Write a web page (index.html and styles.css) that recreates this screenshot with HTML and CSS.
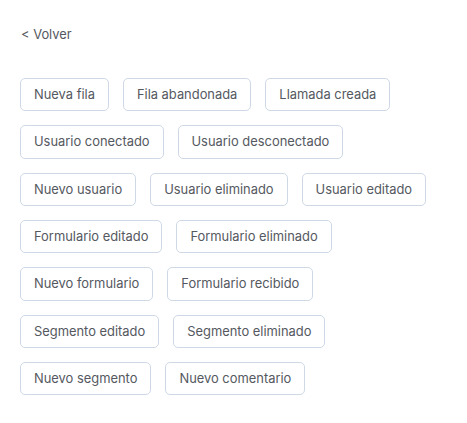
FILE: index.html
```html
<!DOCTYPE html>
<html lang="es">
<head>
<meta charset="utf-8">
<link rel="stylesheet" href="styles.css">
</head>
<body>
<div class="page">
  <a class="back" href="#">&lt; Volver</a>
  <div class="tags">
    <button class="tag">Nueva fila</button>
    <button class="tag">Fila abandonada</button>
    <button class="tag">Llamada creada</button>
    <button class="tag">Usuario conectado</button>
    <button class="tag">Usuario desconectado</button>
    <button class="tag">Nuevo usuario</button>
    <button class="tag">Usuario eliminado</button>
    <button class="tag">Usuario editado</button>
    <button class="tag">Formulario editado</button>
    <button class="tag">Formulario eliminado</button>
    <button class="tag">Nuevo formulario</button>
    <button class="tag">Formulario recibido</button>
    <button class="tag">Segmento editado</button>
    <button class="tag">Segmento eliminado</button>
    <button class="tag">Nuevo segmento</button>
    <button class="tag">Nuevo comentario</button>
  </div>
</div>
</body>
</html>
```
FILE: styles.css
```css
html, body {
  margin: 0;
  padding: 0;
  background: #ffffff;
}
body {
  font-family: Inter, "Noto Sans", sans-serif;
  font-size: 12.9px;
  color: #55595f;
}
.page {
  padding: 27px 20px 20px 21px;
  display: flex;
  flex-direction: column;
  align-items: flex-start;
  gap: 35px;
}
.back {
  color: #55595f;
  text-decoration: none;
  font-size: 12.9px;
  line-height: 16px;
}
.tags {
  display: flex;
  flex-wrap: wrap;
  gap: 14px 14px;
  margin-left: -1px;
  max-width: 426px;
}
.tag {
  font-family: inherit;
  font-size: 12.9px;
  line-height: 15.33px;
  color: #55595f;
  background: #ffffff;
  border: 1px solid #cfd9e6;
  border-radius: 5px;
  padding: 8px 13px 8px 13px;
  cursor: pointer;
}
```
